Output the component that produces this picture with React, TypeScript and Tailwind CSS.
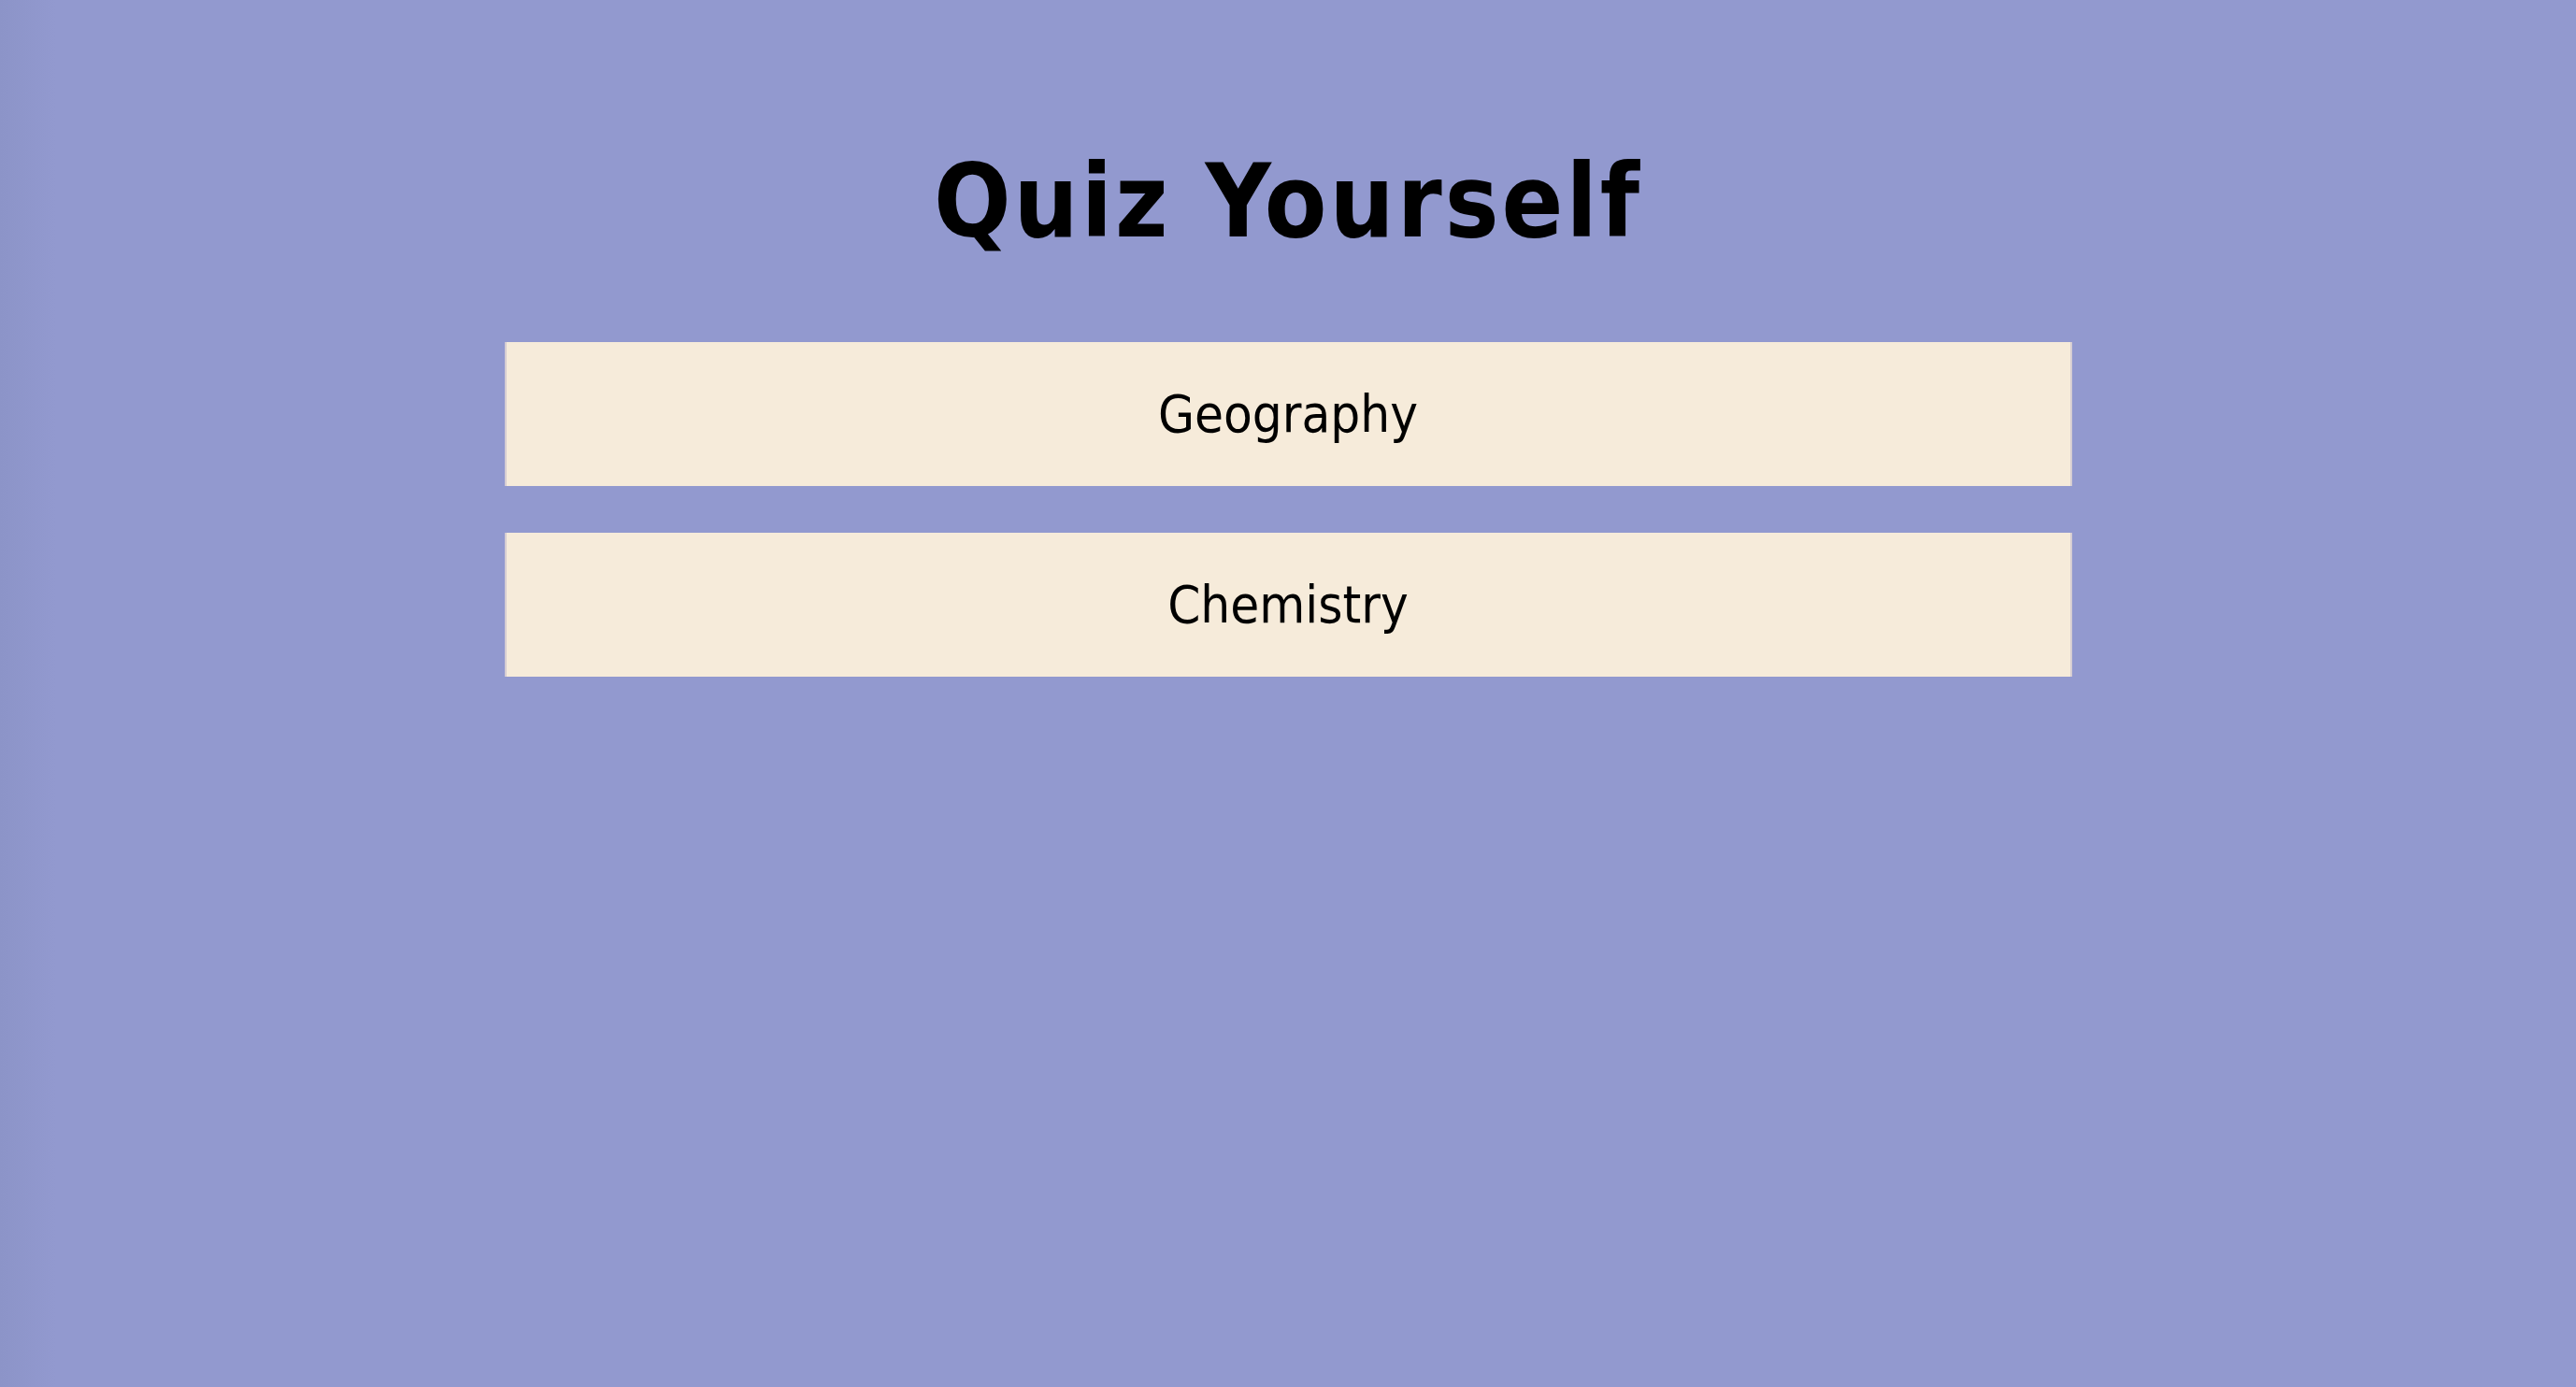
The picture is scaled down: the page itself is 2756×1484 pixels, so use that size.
import React from "react";

export default function App() {
  const subjects = ["Geography", "Chemistry"];
  return (
    <div className="h-screen w-full overflow-hidden bg-[#9299cf] bg-[linear-gradient(90deg,#8c94c8_0px,#9299cf_60px)] font-['DejaVu_Sans_Condensed','DejaVu_Sans',sans-serif] text-black">
      <div className="flex flex-col items-center pt-[162px]">
        <h1 className="text-[108px] font-bold leading-none tracking-[3px] mb-[96px]">Quiz Yourself</h1>
        <div className="flex flex-col gap-[50px] w-[1677px]">
          {subjects.map((s) => (
            <button
              key={s}
              className="h-[154px] w-full bg-[#f6ebda] border-x-2 border-[#d6cdd2] flex items-center justify-center text-[56px] leading-none"
            >
              {s}
            </button>
          ))}
        </div>
      </div>
    </div>
  );
}
